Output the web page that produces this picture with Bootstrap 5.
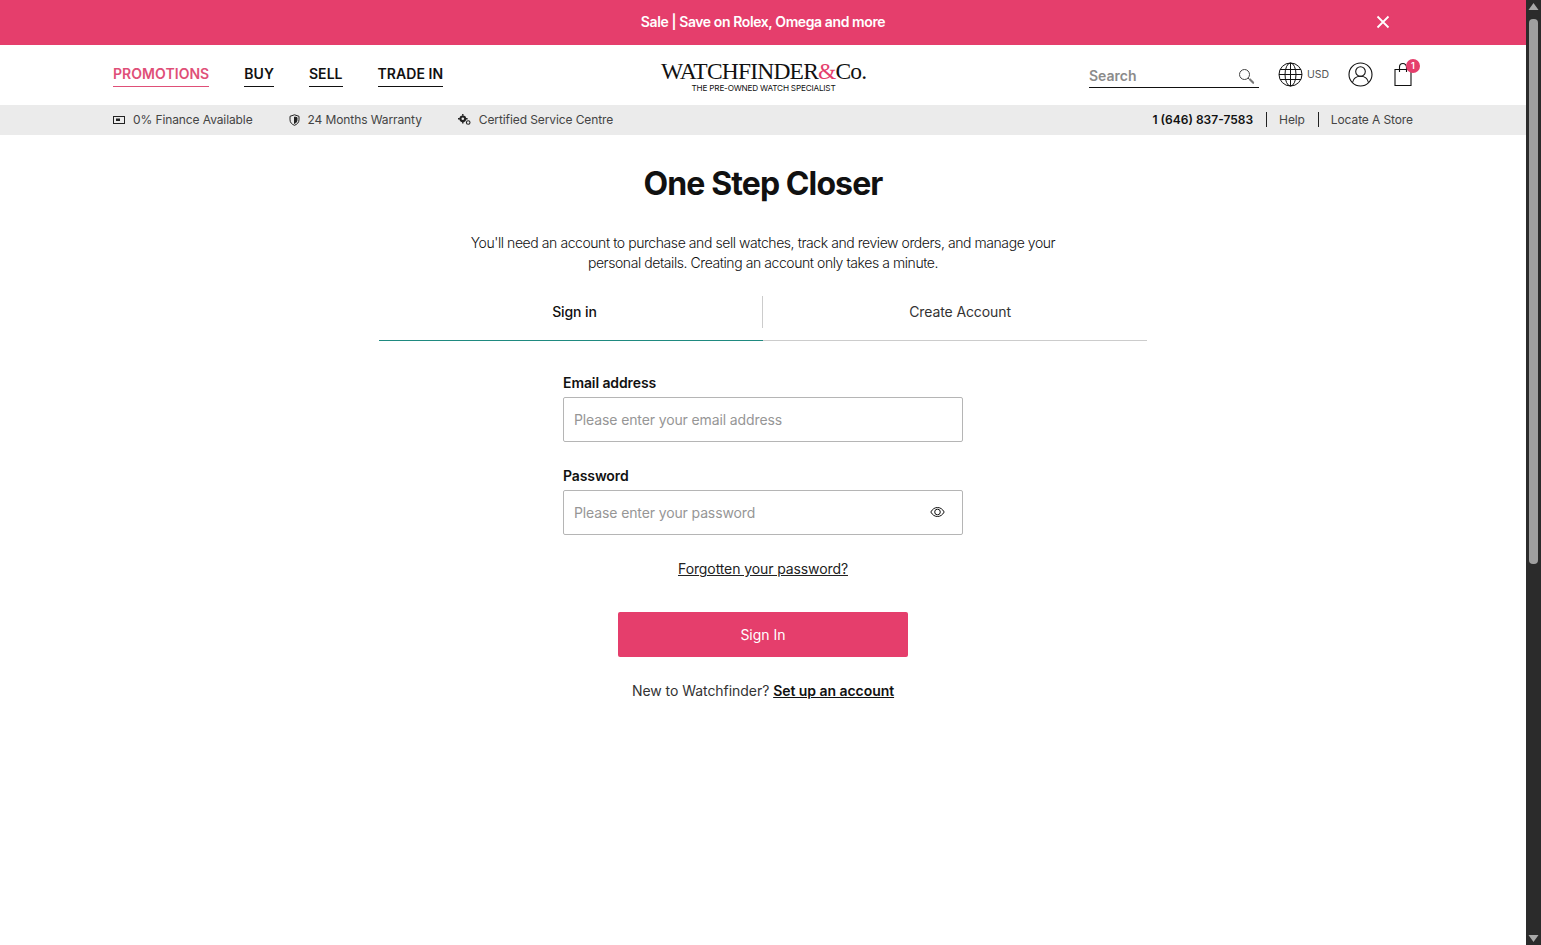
<!DOCTYPE html>
<html lang="en">

<head>
    <meta charset="UTF-8">
    <meta name="viewport" content="width=device-width, initial-scale=1.0">
    <title>Sign in - Watchfinder &amp; Co.</title>
    <link href="https://cdn.jsdelivr.net/npm/bootstrap@5.3.0/dist/css/bootstrap.min.css" rel="stylesheet">
    <style>
        html, body { height: 100%; overflow: hidden; }
        body { font-family: Inter, "Liberation Sans", sans-serif; color: #111; background: #fff; }

        .page-wrap { height: 945px; }
        .page-main { width: 1526px; }

        /* Fake browser scrollbar */
        .fake-scroll { width: 15px; background: #2b2b2b; }
        .scroll-thumb { width: 9px; height: 545px; margin: 5px auto 0; background: #9f9f9f; border-radius: 4px; }

        /* Top banner */
        .promo-banner { height: 45px; background: #e53e6c; color: #fff; font-size: 14px; font-weight: 600; letter-spacing: -.4px; padding-bottom: 2px; }
        .promo-close { right: 135px; top: 14px; line-height: 0; }

        .wf-inner { width: 1300px; margin: 0 auto; }

        /* Main nav */
        .main-bar { height: 60px; }
        .main-links { gap: 35px; padding-top: 1px; }
        .main-links a { display: block; font-size: 14px; font-weight: 600; letter-spacing: .05px; line-height: 20px; padding: 0 0 2px; color: #111; text-decoration: none; border-bottom: 1px solid #111; }
        .main-links a.is-promo { color: #df4f78; border-color: #df4f78; }

        .logo-box { left: 548px; top: 13px; width: 205px; text-align: center; color: #111; }
        .logo-name { font-family: "Liberation Serif", serif; font-size: 23.5px; line-height: 26px; letter-spacing: -.8px; white-space: nowrap; }
        .logo-name span { color: #e53e6c; }
        .logo-tag { font-size: 8.2px; line-height: 9px; letter-spacing: -.2px; white-space: nowrap; }

        .search-box { width: 170px; height: 28px; border-bottom: 1px solid #111; font-size: 14px; font-weight: 600; color: #8b8b8b; margin-top: 15px; padding: 5px 0 0; margin-right: 19px; }
        .search-box svg { margin: 3px 4px 0 0; }
        .bar-icon { margin-top: 17px; }
        .usd-label { font-size: 10.5px; width: 22px; color: #555; margin-left: 4px; }
        .globe-wrap { margin-right: 19px; }
        .user-wrap { margin-right: 21px; }
        .bag-wrap { margin-right: 1px; }
        .bag-count { right: -8px; top: -3px; width: 14px; height: 14px; line-height: 14px; border-radius: 50%; background: #e53e6c; color: #fff; font-size: 9px; font-weight: 600; text-align: center; }

        /* Grey strip */
        .info-strip { height: 30px; background: #ebebeb; font-size: 12px; letter-spacing: -.1px; color: #444; }
        .info-left { gap: 36px; }
        .info-left svg { margin-right: 8px; }
        .info-right { margin-top: -2px; }
        .info-right a { color: #444; text-decoration: none; }
        .info-right a, .info-right strong { padding: 0 13px 0 12px; line-height: 15px; }
        .info-right a:last-child { padding-right: 0; }
        .info-right strong { font-weight: 600; letter-spacing: 0; color: #111; }
        .info-right .has-rule { border-left: 1px solid #222; }

        /* Sign in */
        .signin-title { font-size: 32px; font-weight: 700; letter-spacing: -.9px; line-height: 40px; margin: 29px 0 0; color: #111; }
        .signin-intro { width: 600px; margin: 29px auto 0; font-size: 14px; font-weight: 300; line-height: 20px; letter-spacing: -.43px; color: #111; }

        .tab-row { width: 768px; margin: 23px auto 0; }
        .tab-cell { flex: 0 0 50%; height: 45px; font-size: 14px; line-height: 32px; text-align: center; color: #333; border-bottom: 1px solid #ccc; text-decoration: none; letter-spacing: -.1px; }
        .tab-cell > span { display: block; height: 32px; }
        .tab-cell.active-tab { color: #111; font-weight: 500; border-bottom-color: #1f8a80; }
        .tab-cell.active-tab > span { border-right: 1px solid #ccc; padding-left: 8px; }
        .tab-cell.next-tab > span { padding-left: 10px; margin-left: 0; }

        .signin-form { width: 400px; margin: 32px auto 0; }
        .form-label { font-size: 14px; font-weight: 600; letter-spacing: -.1px; line-height: 20px; margin-bottom: 4px; color: #111; }
        .form-control { height: 45px; border-radius: 2px; border: 1px solid #b5b5b5; padding: 0 10px; font-size: 14px; letter-spacing: -.12px; }
        .form-control::placeholder { color: #969696; }
        .pw-group { margin-top: 24px; }
        .eye-btn { right: 18px; top: 16px; line-height: 0; }

        .forgot-link { display: block; margin-top: 24px; text-align: center; font-size: 14px; letter-spacing: -.1px; line-height: 20px; color: #222; }
        .btn-signin { display: block; width: 290px; height: 45px; margin: 33px auto 0; background: #e53e6c; border: 0; border-radius: 2px; color: #fff; font-size: 14px; }
        .btn-signin:hover { background: #d63261; color: #fff; }
        .new-user { margin-top: 24px; text-align: center; font-size: 14px; letter-spacing: -.05px; line-height: 20px; color: #333; }
        .new-user a { color: #111; font-weight: 600; }
    </style>
</head>

<body>
    <div class="page-wrap d-flex">
        <div class="page-main">

            <div class="promo-banner position-relative d-flex align-items-center justify-content-center">
                <span>Sale | Save on Rolex, Omega and more</span>
                <span class="promo-close position-absolute">
                    <svg width="16" height="16" viewBox="0 0 16 16"><path d="M2.500 2.500l11 11M13.500 2.500l-11 11" stroke="#fff" stroke-width="1.800" fill="none"/></svg>
                </span>
            </div>

            <div class="main-bar">
                <div class="wf-inner position-relative d-flex justify-content-between h-100">
                    <div class="main-links d-flex align-items-center">
                        <a class="is-promo" href="#">PROMOTIONS</a>
                        <a href="#">BUY</a>
                        <a href="#">SELL</a>
                        <a href="#">TRADE IN</a>
                    </div>
                    <div class="logo-box position-absolute">
                        <div class="logo-name">WATCHFINDER<span>&amp;</span>Co.</div>
                        <div class="logo-tag">THE PRE-OWNED WATCH SPECIALIST</div>
                    </div>
                    <div class="d-flex align-items-start">
                        <div class="search-box d-flex justify-content-between">
                            <span>Search</span>
                            <svg width="17" height="17" viewBox="0 0 17 17" fill="none" stroke="#444"><circle cx="6.500" cy="6.500" r="5"/><path d="M10 10l6 5.500" stroke-width="1"/><path d="M11.500 11l4 4" stroke-width="2.200" stroke="#777"/></svg>
                        </div>
                        <div class="globe-wrap bar-icon d-flex align-items-center">
                            <svg width="25" height="25" viewBox="0 0 25 25" fill="none" stroke="#111" stroke-width="1"><circle cx="12.500" cy="12.500" r="11.500"/><ellipse cx="12.500" cy="12.500" rx="5.500" ry="11.500"/><path d="M12.500 1v23M2 7.500h21M2 17.500h21M1 12.500h23"/></svg>
                            <span class="usd-label">USD</span>
                        </div>
                        <div class="user-wrap bar-icon">
                            <svg class="d-block" width="25" height="25" viewBox="0 0 25 25" fill="none" stroke="#111" stroke-width="1.100"><circle cx="12.500" cy="12.500" r="11.500"/><circle cx="12.500" cy="9.500" r="4.800"/><path d="M4.500 20.500c1-4.500 4-6.200 8-6.200s7 1.700 8 6.200"/></svg>
                        </div>
                        <div class="bag-wrap bar-icon position-relative">
                            <svg class="d-block" width="18" height="24" viewBox="0 0 18 24" fill="none" stroke="#111" stroke-width="1.100"><path d="M1 7.500h16v16H1z"/><path d="M5.500 10V5a3.500 3.500 0 017 0v5"/></svg>
                            <span class="bag-count position-absolute">1</span>
                        </div>
                    </div>
                </div>
            </div>

            <div class="info-strip">
                <div class="wf-inner d-flex justify-content-between align-items-center h-100">
                    <div class="info-left d-flex">
                        <span class="d-flex align-items-center">
                            <svg width="12" height="10" viewBox="0 0 12 10" fill="none" stroke="#222"><rect x=".5" y="1.500" width="11" height="7"/><rect x="3" y="3.500" width="4" height="2.500" fill="#222" stroke="none"/></svg>
                            0% Finance Available
                        </span>
                        <span class="d-flex align-items-center">
                            <svg width="11" height="12" viewBox="0 0 11 12" fill="none" stroke="#222"><path d="M5.500.8l4.500 1.500v3.500c0 2.800-2 4.600-4.500 5.500C3 10.400 1 8.600 1 5.800V2.300z"/><path d="M5.500 3v6.500c1.500-.6 2.500-2 2.500-3.700V3.600z" fill="#222"/></svg>
                            24 Months Warranty
                        </span>
                        <span class="d-flex align-items-center">
                            <svg width="13" height="12" viewBox="0 0 13 12" fill="#222"><circle cx="4.800" cy="4.800" r="3.400"/><circle cx="4.800" cy="4.800" r="1.300" fill="#ebebeb"/><path d="M4.100 0h1.400v1.800H4.100zM4.100 7.800h1.400v1.800H4.100zM0 4.100h1.800v1.400H0zM7.800 4.100h1.800v1.400H7.800z"/><circle cx="10.200" cy="8.500" r="1.800" fill="none" stroke="#222" stroke-width="1.100"/></svg>
                            Certified Service Centre
                        </span>
                    </div>
                    <div class="info-right d-flex align-items-center">
                        <strong>1 (646) 837-7583</strong>
                        <a class="has-rule" href="#">Help</a>
                        <a class="has-rule" href="#">Locate A Store</a>
                    </div>
                </div>
            </div>

            <h1 class="signin-title text-center">One Step Closer</h1>
            <p class="signin-intro text-center">You'll need an account to purchase and sell watches, track and review orders, and manage your personal details. Creating an account only takes a minute.</p>

            <div class="tab-row d-flex">
                <a class="tab-cell active-tab" href="#"><span>Sign in</span></a>
                <a class="tab-cell next-tab" href="#"><span>Create Account</span></a>
            </div>

            <form class="signin-form">
                <div>
                    <label class="form-label d-block" for="wfEmail">Email address</label>
                    <input class="form-control" type="email" id="wfEmail" placeholder="Please enter your email address">
                </div>
                <div class="pw-group">
                    <label class="form-label d-block" for="wfPassword">Password</label>
                    <div class="position-relative">
                        <input class="form-control" type="password" id="wfPassword" placeholder="Please enter your password">
                        <span class="eye-btn position-absolute">
                            <svg width="15" height="12" viewBox="0 0 15 12" fill="none" stroke="#111"><path d="M.8 6C2.500 3 4.800 1.500 7.500 1.500S12.500 3 14.200 6c-1.700 3-4 4.500-6.700 4.500S2.500 9 .8 6z"/><circle cx="7.500" cy="6" r="2.800"/></svg>
                        </span>
                    </div>
                </div>
                <a class="forgot-link" href="#">Forgotten your password?</a>
                <button class="btn btn-signin" type="button">Sign In</button>
                <div class="new-user">New to Watchfinder? <a href="#">Set up an account</a></div>
            </form>
        </div>

        <div class="fake-scroll d-flex flex-column justify-content-between">
            <div>
                <svg class="d-block" width="15" height="14" viewBox="0 0 15 14"><path d="M7.500 3l5 7h-10z" fill="#a8a8a8"/></svg>
                <div class="scroll-thumb"></div>
            </div>
            <svg class="d-block" width="15" height="14" viewBox="0 0 15 14"><path d="M7.500 11l5-7h-10z" fill="#a8a8a8"/></svg>
        </div>
    </div>

    <script src="https://cdn.jsdelivr.net/npm/bootstrap@5.3.0/dist/js/bootstrap.bundle.min.js"></script>
</body>

</html>
